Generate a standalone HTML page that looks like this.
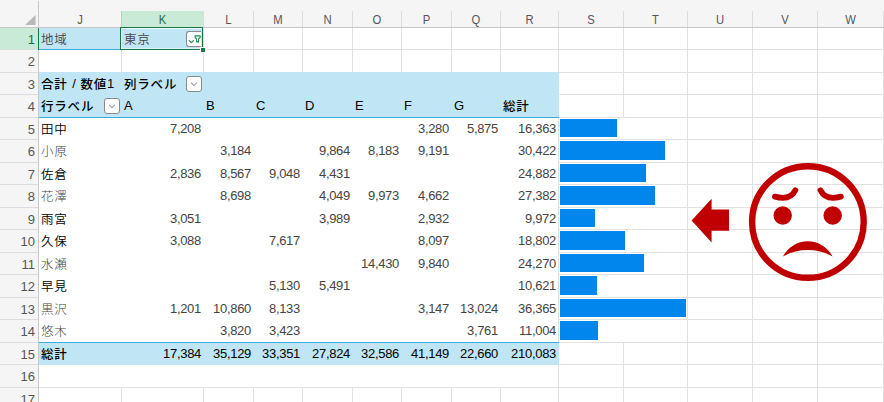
<!DOCTYPE html><html lang="ja"><head><meta charset="utf-8"><title>Pivot</title><style>
html,body{margin:0;padding:0}
body{width:884px;height:402px;overflow:hidden;background:#fff;position:relative;font-family:"Liberation Sans","Noto Sans CJK JP",sans-serif;font-size:13px;color:#444}
div{position:absolute;box-sizing:border-box;white-space:nowrap}
.t{height:22px;line-height:22px}
.b{font-weight:500;color:#000}
.n{text-align:right;letter-spacing:-.3px}
.j{font-size:12.5px;letter-spacing:.8px;position:relative;top:1px}
.l .j{font-weight:300}
.d .j{font-weight:350}
.b .j{font-weight:500}
.ch{color:#4a4a4a;text-align:center;font-size:12.5px;transform:scaleX(.9);height:16px;line-height:16px;top:12px}
.rh{color:#555;text-align:right;font-size:13px;width:35px;left:0;margin-top:1px}
.btn{width:16px;height:16px;border:1px solid #8a8a8a;border-radius:3px;background:#fff}

</style></head><body>
<div style="left:0px;top:0px;width:884px;height:28px;background:#f5f5f5;"></div>
<div style="left:0px;top:28px;width:39px;height:374px;background:#f5f5f5;"></div>
<div style="left:121px;top:11px;width:83px;height:16px;background:#c9ead7;"></div>
<div style="left:0px;top:28px;width:38px;height:22px;background:#c9ead7;"></div>
<div style="left:0px;top:27px;width:884px;height:1px;background:#c6c6c6;"></div>
<div style="left:38px;top:1px;width:1px;height:402px;background:#c9c9c9;"></div>
<div style="left:121px;top:11px;width:1px;height:16px;background:#a9dcbe;"></div>
<div style="left:203px;top:11px;width:1px;height:16px;background:#dcdcdc;"></div>
<div style="left:253px;top:11px;width:1px;height:16px;background:#dcdcdc;"></div>
<div style="left:302px;top:11px;width:1px;height:16px;background:#dcdcdc;"></div>
<div style="left:352px;top:11px;width:1px;height:16px;background:#dcdcdc;"></div>
<div style="left:401px;top:11px;width:1px;height:16px;background:#dcdcdc;"></div>
<div style="left:451px;top:11px;width:1px;height:16px;background:#dcdcdc;"></div>
<div style="left:500px;top:11px;width:1px;height:16px;background:#dcdcdc;"></div>
<div style="left:558px;top:11px;width:1px;height:16px;background:#dcdcdc;"></div>
<div style="left:623px;top:11px;width:1px;height:16px;background:#dcdcdc;"></div>
<div style="left:687px;top:11px;width:1px;height:16px;background:#dcdcdc;"></div>
<div style="left:752px;top:11px;width:1px;height:16px;background:#dcdcdc;"></div>
<div style="left:817px;top:11px;width:1px;height:16px;background:#dcdcdc;"></div>
<div style="left:883px;top:11px;width:1px;height:16px;background:#dcdcdc;"></div>
<svg style="position:absolute;left:25px;top:15px" width="11" height="10"><path d="M10.5 0V10H0Z" fill="#b9b9b9"/></svg>
<div style="left:0px;top:49px;width:38px;height:1px;background:#dcdcdc;"></div>
<div style="left:0px;top:72px;width:38px;height:1px;background:#dcdcdc;"></div>
<div style="left:0px;top:94px;width:38px;height:1px;background:#dcdcdc;"></div>
<div style="left:0px;top:117px;width:38px;height:1px;background:#dcdcdc;"></div>
<div style="left:0px;top:139px;width:38px;height:1px;background:#dcdcdc;"></div>
<div style="left:0px;top:162px;width:38px;height:1px;background:#dcdcdc;"></div>
<div style="left:0px;top:184px;width:38px;height:1px;background:#dcdcdc;"></div>
<div style="left:0px;top:207px;width:38px;height:1px;background:#dcdcdc;"></div>
<div style="left:0px;top:229px;width:38px;height:1px;background:#dcdcdc;"></div>
<div style="left:0px;top:252px;width:38px;height:1px;background:#dcdcdc;"></div>
<div style="left:0px;top:274px;width:38px;height:1px;background:#dcdcdc;"></div>
<div style="left:0px;top:297px;width:38px;height:1px;background:#dcdcdc;"></div>
<div style="left:0px;top:319px;width:38px;height:1px;background:#dcdcdc;"></div>
<div style="left:0px;top:342px;width:38px;height:1px;background:#dcdcdc;"></div>
<div style="left:0px;top:364px;width:38px;height:1px;background:#dcdcdc;"></div>
<div style="left:0px;top:387px;width:38px;height:1px;background:#dcdcdc;"></div>
<div style="left:0px;top:409px;width:38px;height:1px;background:#dcdcdc;"></div>
<div style="left:39px;top:49px;width:845px;height:1px;background:#e1e1e1;"></div>
<div style="left:39px;top:72px;width:845px;height:1px;background:#e1e1e1;"></div>
<div style="left:39px;top:94px;width:845px;height:1px;background:#e1e1e1;"></div>
<div style="left:39px;top:117px;width:845px;height:1px;background:#e1e1e1;"></div>
<div style="left:39px;top:139px;width:845px;height:1px;background:#e1e1e1;"></div>
<div style="left:39px;top:162px;width:845px;height:1px;background:#e1e1e1;"></div>
<div style="left:39px;top:184px;width:845px;height:1px;background:#e1e1e1;"></div>
<div style="left:39px;top:207px;width:845px;height:1px;background:#e1e1e1;"></div>
<div style="left:39px;top:229px;width:845px;height:1px;background:#e1e1e1;"></div>
<div style="left:39px;top:252px;width:845px;height:1px;background:#e1e1e1;"></div>
<div style="left:39px;top:274px;width:845px;height:1px;background:#e1e1e1;"></div>
<div style="left:39px;top:297px;width:845px;height:1px;background:#e1e1e1;"></div>
<div style="left:39px;top:319px;width:845px;height:1px;background:#e1e1e1;"></div>
<div style="left:39px;top:342px;width:845px;height:1px;background:#e1e1e1;"></div>
<div style="left:39px;top:364px;width:845px;height:1px;background:#e1e1e1;"></div>
<div style="left:39px;top:387px;width:845px;height:1px;background:#e1e1e1;"></div>
<div style="left:39px;top:409px;width:845px;height:1px;background:#e1e1e1;"></div>
<div style="left:121px;top:28px;width:1px;height:374px;background:#e1e1e1;"></div>
<div style="left:203px;top:28px;width:1px;height:374px;background:#e1e1e1;"></div>
<div style="left:253px;top:28px;width:1px;height:374px;background:#e1e1e1;"></div>
<div style="left:302px;top:28px;width:1px;height:374px;background:#e1e1e1;"></div>
<div style="left:352px;top:28px;width:1px;height:374px;background:#e1e1e1;"></div>
<div style="left:401px;top:28px;width:1px;height:374px;background:#e1e1e1;"></div>
<div style="left:451px;top:28px;width:1px;height:374px;background:#e1e1e1;"></div>
<div style="left:500px;top:28px;width:1px;height:374px;background:#e1e1e1;"></div>
<div style="left:558px;top:28px;width:1px;height:374px;background:#e1e1e1;"></div>
<div style="left:623px;top:28px;width:1px;height:90px;background:#e1e1e1;"></div>
<div style="left:623px;top:342px;width:1px;height:60px;background:#e1e1e1;"></div>
<div style="left:687px;top:28px;width:1px;height:374px;background:#e1e1e1;"></div>
<div style="left:752px;top:28px;width:1px;height:374px;background:#e1e1e1;"></div>
<div style="left:817px;top:28px;width:1px;height:374px;background:#e1e1e1;"></div>
<div style="left:883px;top:28px;width:1px;height:374px;background:#e1e1e1;"></div>
<div style="left:39px;top:118px;width:519px;height:269px;background:#fff;"></div>
<div style="left:39px;top:28px;width:165px;height:21px;background:#c0e6f5;"></div>
<div style="left:39px;top:72px;width:520px;height:45px;background:#c0e6f5;"></div>
<div style="left:39px;top:343px;width:520px;height:22px;background:#c0e6f5;"></div>
<div style="left:39px;top:49px;width:82px;height:1px;background:#3dade0;"></div>
<div style="left:39px;top:117px;width:520px;height:1px;background:#3dade0;"></div>
<div style="left:39px;top:342px;width:520px;height:1px;background:#3dade0;"></div>
<div style="left:120px;top:27px;width:83px;height:23px;background:transparent;border:1px solid #147a43;box-shadow:inset 1px 1px 0 0 rgba(255,255,255,.8), inset 0 -1px 0 0 rgba(255,255,255,.5);"></div>
<div style="left:200px;top:47px;width:6px;height:6px;background:#fff;"></div>
<div style="left:201px;top:48px;width:4px;height:4px;background:#147a43;"></div>
<div style="left:38px;top:28px;width:1px;height:22px;background:#147a43;"></div>
<div class="ch" style="left:39px;width:82px;color:#555">J</div>
<div class="ch" style="left:122px;width:81px;color:#1e6e42">K</div>
<div class="ch" style="left:204px;width:49px;color:#555">L</div>
<div class="ch" style="left:254px;width:48px;color:#555">M</div>
<div class="ch" style="left:303px;width:49px;color:#555">N</div>
<div class="ch" style="left:353px;width:48px;color:#555">O</div>
<div class="ch" style="left:402px;width:49px;color:#555">P</div>
<div class="ch" style="left:452px;width:48px;color:#555">Q</div>
<div class="ch" style="left:501px;width:57px;color:#555">R</div>
<div class="ch" style="left:559px;width:64px;color:#555">S</div>
<div class="ch" style="left:624px;width:63px;color:#555">T</div>
<div class="ch" style="left:688px;width:64px;color:#555">U</div>
<div class="ch" style="left:753px;width:64px;color:#555">V</div>
<div class="ch" style="left:818px;width:65px;color:#555">W</div>
<div class="rh t" style="top:28px;color:#1e6e42">1</div>
<div class="rh t" style="top:50px;color:#555">2</div>
<div class="rh t" style="top:73px;color:#555">3</div>
<div class="rh t" style="top:95px;color:#555">4</div>
<div class="rh t" style="top:118px;color:#555">5</div>
<div class="rh t" style="top:140px;color:#555">6</div>
<div class="rh t" style="top:163px;color:#555">7</div>
<div class="rh t" style="top:185px;color:#555">8</div>
<div class="rh t" style="top:208px;color:#555">9</div>
<div class="rh t" style="top:230px;color:#555">10</div>
<div class="rh t" style="top:253px;color:#555">11</div>
<div class="rh t" style="top:275px;color:#555">12</div>
<div class="rh t" style="top:298px;color:#555">13</div>
<div class="rh t" style="top:320px;color:#555">14</div>
<div class="rh t" style="top:343px;color:#555">15</div>
<div class="rh t" style="top:365px;color:#555">16</div>
<div class="rh t" style="top:388px;color:#555">17</div>
<div class="t d" style="left:41px;top:28px;"><span class="j">地域</span></div>
<div class="t d" style="left:124px;top:28px;"><span class="j">東京</span></div>
<div class="t b" style="left:41px;top:73px;word-spacing:1px"><span class="j">合計</span> / <span class="j">数値</span>1</div>
<div class="t b" style="left:124px;top:73px;"><span class="j">列ラベル</span></div>
<div class="t b" style="left:41px;top:95px;"><span class="j">行ラベル</span></div>
<div class="t b" style="left:124px;top:95px;">A</div>
<div class="t b" style="left:206px;top:95px;">B</div>
<div class="t b" style="left:256px;top:95px;">C</div>
<div class="t b" style="left:305px;top:95px;">D</div>
<div class="t b" style="left:355px;top:95px;">E</div>
<div class="t b" style="left:404px;top:95px;">F</div>
<div class="t b" style="left:454px;top:95px;">G</div>
<div class="t b" style="left:503px;top:95px;"><span class="j">総計</span></div>
<div class="t d" style="left:41px;top:118px;color:#000"><span class="j">田中</span></div>
<div class="t n" style="left:122px;top:118px;width:79px;">7,208</div>
<div class="t n" style="left:402px;top:118px;width:47px;">3,280</div>
<div class="t n" style="left:452px;top:118px;width:46px;">5,875</div>
<div class="t n" style="left:501px;top:118px;width:55px;">16,363</div>
<div style="left:560px;top:119px;width:57px;height:18px;background:#0086ec;"></div>
<div class="t l" style="left:41px;top:140px;color:#444"><span class="j">小原</span></div>
<div class="t n" style="left:204px;top:140px;width:47px;">3,184</div>
<div class="t n" style="left:303px;top:140px;width:47px;">9,864</div>
<div class="t n" style="left:353px;top:140px;width:46px;">8,183</div>
<div class="t n" style="left:402px;top:140px;width:47px;">9,191</div>
<div class="t n" style="left:501px;top:140px;width:55px;">30,422</div>
<div style="left:560px;top:141px;width:105px;height:19px;background:#0086ec;"></div>
<div class="t d" style="left:41px;top:163px;color:#000"><span class="j">佐倉</span></div>
<div class="t n" style="left:122px;top:163px;width:79px;">2,836</div>
<div class="t n" style="left:204px;top:163px;width:47px;">8,567</div>
<div class="t n" style="left:254px;top:163px;width:46px;">9,048</div>
<div class="t n" style="left:303px;top:163px;width:47px;">4,431</div>
<div class="t n" style="left:501px;top:163px;width:55px;">24,882</div>
<div style="left:560px;top:164px;width:86px;height:18px;background:#0086ec;"></div>
<div class="t l" style="left:41px;top:185px;color:#444"><span class="j">花澤</span></div>
<div class="t n" style="left:204px;top:185px;width:47px;">8,698</div>
<div class="t n" style="left:303px;top:185px;width:47px;">4,049</div>
<div class="t n" style="left:353px;top:185px;width:46px;">9,973</div>
<div class="t n" style="left:402px;top:185px;width:47px;">4,662</div>
<div class="t n" style="left:501px;top:185px;width:55px;">27,382</div>
<div style="left:560px;top:186px;width:95px;height:19px;background:#0086ec;"></div>
<div class="t d" style="left:41px;top:208px;color:#000"><span class="j">雨宮</span></div>
<div class="t n" style="left:122px;top:208px;width:79px;">3,051</div>
<div class="t n" style="left:303px;top:208px;width:47px;">3,989</div>
<div class="t n" style="left:402px;top:208px;width:47px;">2,932</div>
<div class="t n" style="left:501px;top:208px;width:55px;">9,972</div>
<div style="left:560px;top:209px;width:35px;height:18px;background:#0086ec;"></div>
<div class="t d" style="left:41px;top:230px;color:#000"><span class="j">久保</span></div>
<div class="t n" style="left:122px;top:230px;width:79px;">3,088</div>
<div class="t n" style="left:254px;top:230px;width:46px;">7,617</div>
<div class="t n" style="left:402px;top:230px;width:47px;">8,097</div>
<div class="t n" style="left:501px;top:230px;width:55px;">18,802</div>
<div style="left:560px;top:231px;width:65px;height:19px;background:#0086ec;"></div>
<div class="t l" style="left:41px;top:253px;color:#444"><span class="j">水瀬</span></div>
<div class="t n" style="left:353px;top:253px;width:46px;">14,430</div>
<div class="t n" style="left:402px;top:253px;width:47px;">9,840</div>
<div class="t n" style="left:501px;top:253px;width:55px;">24,270</div>
<div style="left:560px;top:254px;width:84px;height:18px;background:#0086ec;"></div>
<div class="t d" style="left:41px;top:275px;color:#000"><span class="j">早見</span></div>
<div class="t n" style="left:254px;top:275px;width:46px;">5,130</div>
<div class="t n" style="left:303px;top:275px;width:47px;">5,491</div>
<div class="t n" style="left:501px;top:275px;width:55px;">10,621</div>
<div style="left:560px;top:276px;width:37px;height:19px;background:#0086ec;"></div>
<div class="t l" style="left:41px;top:298px;color:#444"><span class="j">黒沢</span></div>
<div class="t n" style="left:122px;top:298px;width:79px;">1,201</div>
<div class="t n" style="left:204px;top:298px;width:47px;">10,860</div>
<div class="t n" style="left:254px;top:298px;width:46px;">8,133</div>
<div class="t n" style="left:402px;top:298px;width:47px;">3,147</div>
<div class="t n" style="left:452px;top:298px;width:46px;">13,024</div>
<div class="t n" style="left:501px;top:298px;width:55px;">36,365</div>
<div style="left:560px;top:299px;width:126px;height:18px;background:#0086ec;"></div>
<div class="t l" style="left:41px;top:320px;color:#444"><span class="j">悠木</span></div>
<div class="t n" style="left:204px;top:320px;width:47px;">3,820</div>
<div class="t n" style="left:254px;top:320px;width:46px;">3,423</div>
<div class="t n" style="left:452px;top:320px;width:46px;">3,761</div>
<div class="t n" style="left:501px;top:320px;width:55px;">11,004</div>
<div style="left:560px;top:321px;width:38px;height:19px;background:#0086ec;"></div>
<div class="t b" style="left:41px;top:343px;"><span class="j">総計</span></div>
<div class="t n b" style="left:122px;top:343px;width:79px;">17,384</div>
<div class="t n b" style="left:204px;top:343px;width:47px;">35,129</div>
<div class="t n b" style="left:254px;top:343px;width:46px;">33,351</div>
<div class="t n b" style="left:303px;top:343px;width:47px;">27,824</div>
<div class="t n b" style="left:353px;top:343px;width:46px;">32,586</div>
<div class="t n b" style="left:402px;top:343px;width:47px;">41,149</div>
<div class="t n b" style="left:452px;top:343px;width:46px;">22,660</div>
<div class="t n b" style="left:501px;top:343px;width:55px;">210,083</div>
<div class="btn" style="left:186px;top:76px"><svg width="14" height="14" style="position:absolute;left:0;top:0"><path d="M4.4 6.1 L7 8.5 L9.6 6.1" fill="none" stroke="#777" stroke-width="1" stroke-linecap="round" stroke-linejoin="round"/></svg></div>
<div class="btn" style="left:104px;top:98px"><svg width="14" height="14" style="position:absolute;left:0;top:0"><path d="M4.4 6.1 L7 8.5 L9.6 6.1" fill="none" stroke="#777" stroke-width="1" stroke-linecap="round" stroke-linejoin="round"/></svg></div>
<div class="btn" style="left:186px;top:31px;width:14.5px;border-right:none;border-radius:3px 0 0 3px"><svg width="14" height="14" style="position:absolute;left:0;top:0"><path d="M2.2 8.6 L4.3 10.6 L6.4 8.6" fill="none" stroke="#1e8a4c" stroke-width="1.1" stroke-linecap="round" stroke-linejoin="round"/><path d="M8 3.9 H13.2 V5.4 L11.6 7 V9.9 H9.6 V7 L8 5.4 Z" fill="none" stroke="#1e8a4c" stroke-width="1.1" stroke-linejoin="round"/></svg></div>
<svg style="position:absolute;left:680px;top:150px" width="204" height="150" viewBox="680 150 204 150">
<path d="M691.6 220.5 L711.6 198.7 V209.4 H729 V230.7 H711.6 V242.5 Z" fill="#c00000"/>
<circle cx="807.9" cy="222" r="55.8" fill="none" stroke="#c00000" stroke-width="6.4"/>
<circle cx="782.7" cy="215.5" r="9.2" fill="#c00000"/>
<circle cx="832.7" cy="215.5" r="9.2" fill="#c00000"/>
<path d="M774.9 196.6 Q790 201 795.3 190.3" fill="none" stroke="#c00000" stroke-width="5.8" stroke-linecap="round"/>
<path d="M840.9 196.6 Q825.8 201 820.5 190.3" fill="none" stroke="#c00000" stroke-width="5.8" stroke-linecap="round"/>
<path d="M783 256.5 A27.75 27.75 0 0 1 832.5 256.5 A50.4 50.4 0 0 0 783 256.5 Z" fill="#c00000"/>
</svg>
</body></html>
